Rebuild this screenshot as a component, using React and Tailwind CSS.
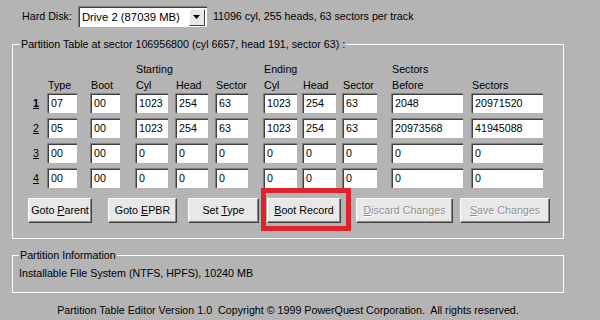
import React from 'react';

const cols = [
  { key: 'type', w: 'w-[30px]', ml: 'ml-0', top: '', label: 'Type' },
  { key: 'boot', w: 'w-[30px]', ml: 'ml-[13px]', top: '', label: 'Boot' },
  { key: 'scyl', w: 'w-[33px]', ml: 'ml-[15px]', top: 'Starting', label: 'Cyl' },
  { key: 'shead', w: 'w-[33px]', ml: 'ml-[7px]', top: '', label: 'Head' },
  { key: 'ssec', w: 'w-[33px]', ml: 'ml-[7px]', top: '', label: 'Sector' },
  { key: 'ecyl', w: 'w-[34px]', ml: 'ml-[15px]', top: 'Ending', label: 'Cyl' },
  { key: 'ehead', w: 'w-[34px]', ml: 'ml-[5px]', top: '', label: 'Head' },
  { key: 'esec', w: 'w-[35px]', ml: 'ml-[6px]', top: '', label: 'Sector' },
  { key: 'before', w: 'w-[72px]', ml: 'ml-[14px]', top: 'Sectors', label: 'Before' },
  { key: 'count', w: 'w-[72px]', ml: 'ml-[8px]', top: '', label: 'Sectors' },
];

const rows = [
  ['07', '00', '1023', '254', '63', '1023', '254', '63', '2048', '20971520'],
  ['05', '00', '1023', '254', '63', '1023', '254', '63', '20973568', '41945088'],
  ['00', '00', '0', '0', '0', '0', '0', '0', '0', '0'],
  ['00', '00', '0', '0', '0', '0', '0', '0', '0', '0'],
];

function Field({ value, className }) {
  return (
    <div
      className={`${className} h-[20px] bg-white border-t border-l border-[#808080] border-b-white border-r-white shadow-[inset_1px_1px_0_#404040] pl-[3px] leading-[19px] overflow-hidden whitespace-nowrap`}
    >
      {value}
    </div>
  );
}

function Button({ children, className, disabled }) {
  return (
    <div
      className={`${className} h-[25px] flex items-center justify-center bg-[#e8e8e8] border border-t-white border-l-white border-b-[#404040] border-r-[#404040] shadow-[inset_-1px_-1px_0_#8a8a8a] whitespace-nowrap ${
        disabled ? 'text-[#8f8f8f] [text-shadow:1px_1px_0_#ffffff]' : 'text-black'
      }`}
    >
      <span>{children}</span>
    </div>
  );
}

export default function App() {
  return (
    <div className="w-[600px] h-[320px] bg-[#b4b4b4] text-black text-[10.7px] font-['Liberation_Sans','Arial',sans-serif] overflow-hidden">
      {/* drive selector */}
      <div className="flex items-center pl-[22px] pt-[6px] h-[27px]">
        <span>Hard Disk:</span>
        <div className="ml-[6px] w-[129px] h-[21px] bg-white border-t border-l border-[#808080] border-b-white border-r-white shadow-[inset_1px_1px_0_#404040] flex items-center justify-between pl-[3px] pr-[2px]">
          <span className="text-[11.3px]">Drive 2 (87039 MB)</span>
          <div className="w-[16px] h-[17px] bg-[#e8e8e8] border border-t-white border-l-white border-b-[#404040] border-r-[#404040] flex items-center justify-center">
            <svg width="7" height="4" viewBox="0 0 7 4">
              <path d="M0 0h7L3.5 4z" fill="#000" />
            </svg>
          </div>
        </div>
        <span className="ml-[6px]">11096 cyl, 255 heads, 63 sectors per track</span>
      </div>

      {/* partition table */}
      <fieldset className="mt-[10px] ml-[12px] w-[552px] border border-white pb-[15px]">
        <legend className="ml-[7px] px-[1px] leading-[15px]">
          Partition Table at sector 106956800 (cyl 6657, head 191, sector 63) :
        </legend>

        <div className="pt-[9px] leading-[16px]">
          <div className="flex">
            <div className="w-[34px]" />
            {cols.map((c) => (
              <div key={c.key} className={`${c.w} ${c.ml} pl-[1px] whitespace-nowrap`}>
                {c.top || '\u00a0'}
              </div>
            ))}
          </div>
          <div className="flex">
            <div className="w-[34px]" />
            {cols.map((c) => (
              <div key={c.key} className={`${c.w} ${c.ml} pl-[1px] whitespace-nowrap`}>
                {c.label}
              </div>
            ))}
          </div>
        </div>

        <div className="flex flex-col gap-[5px]">
          {rows.map((r, i) => (
            <div key={i} className="flex items-center">
              <div className="w-[34px] pl-[20px]">
                <span className={`underline ${i === 0 ? 'font-bold' : ''}`}>{i + 1}</span>
              </div>
              {cols.map((c, j) => (
                <Field key={c.key} value={r[j]} className={`${c.w} ${c.ml}`} />
              ))}
            </div>
          ))}
        </div>

        <div className="flex mt-[10px] pl-[15px]">
          <Button className="w-[64px]">
            Goto <u>P</u>arent
          </Button>
          <Button className="w-[69px] ml-[16px]">
            Goto <u>E</u>PBR
          </Button>
          <Button className="w-[71px] ml-[11px]">
            Set <u>T</u>ype
          </Button>
          <div className="relative ml-[8px]">
            <Button className="w-[74px]">
              <u>B</u>oot Record
            </Button>
            <div className="absolute left-[-6px] top-[-10px] w-[90px] h-[43px] border-[5px] border-[#e0222a] pointer-events-none" />
          </div>
          <Button className="w-[97px] ml-[15px]" disabled>
            <u>D</u>iscard Changes
          </Button>
          <Button className="w-[90px] ml-[7px]" disabled>
            <u>S</u>ave Changes
          </Button>
        </div>
      </fieldset>

      {/* partition info */}
      <fieldset className="mt-[9px] ml-[12px] w-[552px] border border-white">
        <legend className="ml-[6px] px-[1px] leading-[15px]">Partition Information</legend>
        <div className="pl-[6px] pt-[3px] pb-[11px] leading-[15px]">
          Installable File System (NTFS, HPFS), 10240 MB
        </div>
      </fieldset>

      <div className="ml-[12px] w-[552px] mt-[10px] text-center leading-[15px] whitespace-pre">
        Partition Table Editor Version 1.0  Copyright © 1999 PowerQuest Corporation.  All rights reserved.
      </div>
    </div>
  );
}
